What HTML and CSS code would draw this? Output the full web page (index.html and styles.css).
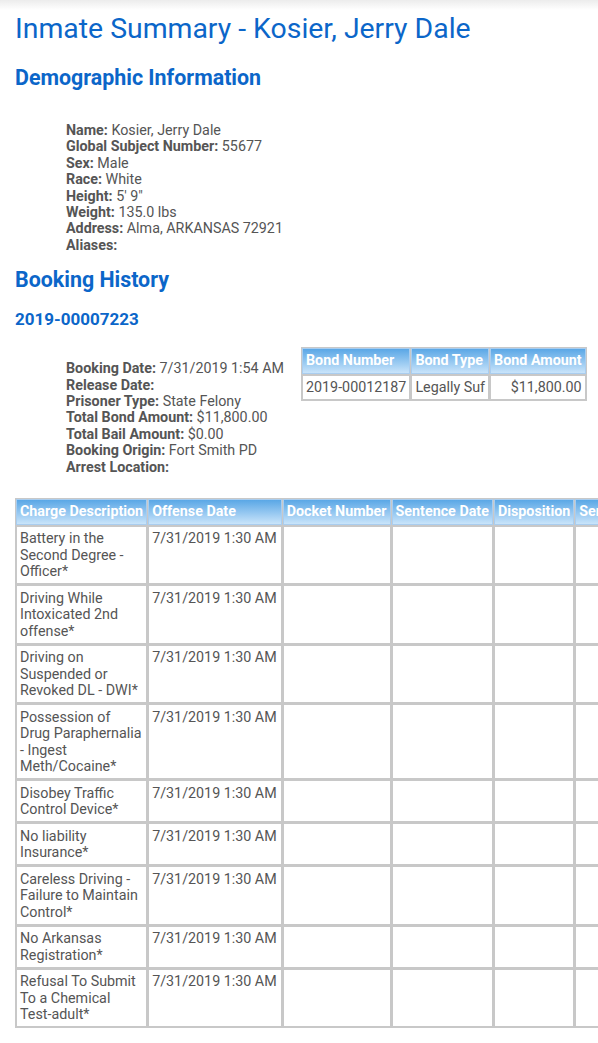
FILE: index.html
```html
<!DOCTYPE html>
<html lang="en">
<head>
  <meta charset="UTF-8">
  <meta name="viewport" content="width=device-width, initial-scale=1.0">
  <title>Inmate Summary - Kosier, Jerry Dale</title>
  <link rel="stylesheet" href="styles.css">
</head>
<body>
  <h1 class="title">Inmate Summary - Kosier, Jerry Dale</h1>

  <h2 class="section-title">Demographic Information</h2>
  <div class="details">
    <strong>Name:</strong> Kosier, Jerry Dale<br>
    <strong>Global Subject Number:</strong> 55677<br>
    <strong>Sex:</strong> Male<br>
    <strong>Race:</strong> White<br>
    <strong>Height:</strong> 5' 9"<br>
    <strong>Weight:</strong> 135.0 lbs<br>
    <strong>Address:</strong> Alma, ARKANSAS 72921<br>
    <strong>Aliases:</strong>
  </div>

  <h2 class="section-title">Booking History</h2>
  <h3 class="booking-no">2019-00007223</h3>
  <div class="booking">
    <div class="details booking-details">
      <strong>Booking Date:</strong> 7/31/2019 1:54 AM<br>
      <strong>Release Date:</strong><br>
      <strong>Prisoner Type:</strong> State Felony<br>
      <strong>Total Bond Amount:</strong> $11,800.00<br>
      <strong>Total Bail Amount:</strong> $0.00<br>
      <strong>Booking Origin:</strong> Fort Smith PD<br>
      <strong>Arrest Location:</strong>
    </div>
    <table class="grid bond">
      <thead>
        <tr><th>Bond Number</th><th>Bond Type</th><th>Bond Amount</th></tr>
      </thead>
      <tbody>
        <tr><td>2019-00012187</td><td>Legally Suf</td><td class="money">$11,800.00</td></tr>
      </tbody>
    </table>
  </div>

  <table class="grid charges">
    <thead>
      <tr>
        <th>Charge Description</th>
        <th>Offense Date</th>
        <th>Docket Number</th>
        <th>Sentence Date</th>
        <th>Disposition</th>
        <th>Sentence Length</th>
      </tr>
    </thead>
    <tbody id="charges"></tbody>
  </table>

  <script>
    const charges = [
      "Battery in the Second Degree - Officer*",
      "Driving While Intoxicated 2nd offense*",
      "Driving on Suspended or Revoked DL - DWI*",
      "Possession of Drug Paraphernalia - Ingest Meth/Cocaine*",
      "Disobey Traffic Control Device*",
      "No liability Insurance*",
      "Careless Driving - Failure to Maintain Control*",
      "No Arkansas Registration*",
      "Refusal To Submit To a Chemical Test-adult*"
    ];
    const body = document.getElementById("charges");
    body.innerHTML = charges.map((c) => `
      <tr>
        <td class="desc">${c}</td>
        <td class="date">7/31/2019 1:30 AM</td>
        <td></td><td></td><td></td><td></td>
      </tr>`).join("");
  </script>
</body>
</html>
```

FILE: styles.css
```css
body {
  margin: 0;
  padding: 12px 15px 20px;
  font-family: Roboto, "Liberation Sans", sans-serif;
  font-size: 14.3px;
  line-height: 16.4px;
  color: #555;
  background: linear-gradient(#ececec, #fff 10px) no-repeat;
}
.title {
  margin: 0 0 20px;
  font-size: 28.4px;
  line-height: 33px;
  font-weight: normal;
  color: #0b66c9;
}
.section-title {
  margin: 0;
  font-size: 21.4px;
  line-height: 25px;
  font-weight: bold;
  color: #0b66c9;
}
.booking-no {
  margin: 17px 0 0;
  font-size: 17px;
  line-height: 20px;
  font-weight: bold;
  color: #0b66c9;
}
.details {
  margin: 32px 0 14px 51px;
}
.details strong {
  color: #555;
}
.booking {
  display: flex;
  align-items: flex-start;
  margin-top: 18px;
}
.booking-details {
  flex: none;
  width: 235px;
  margin: 13px 0 0 51px;
}
.bond {
  flex: none;
}
.bond th {
  padding: 3px 4px;
}
.grid {
  border-collapse: separate;
  border-spacing: 1px;
  background: #c8c8c8;
  white-space: nowrap;
}
.grid th {
  padding: 3px 3px 4px;
  text-align: left;
  color: #fff;
  font-weight: bold;
  background: linear-gradient(#5aa7e6, #c9e4fa);
  border: 1px solid #a9cdef;
}
.grid td {
  padding: 3.5px 3px;
  line-height: 16.5px;
  vertical-align: top;
  background: #fff;
  border: 1px solid #c8c8c8;
}
.grid .date {
  padding-right: 4px;
}
.grid .money {
  text-align: right;
}
.grid .desc {
  white-space: normal;
}
.charges {
  margin-top: 23px;
}
```
